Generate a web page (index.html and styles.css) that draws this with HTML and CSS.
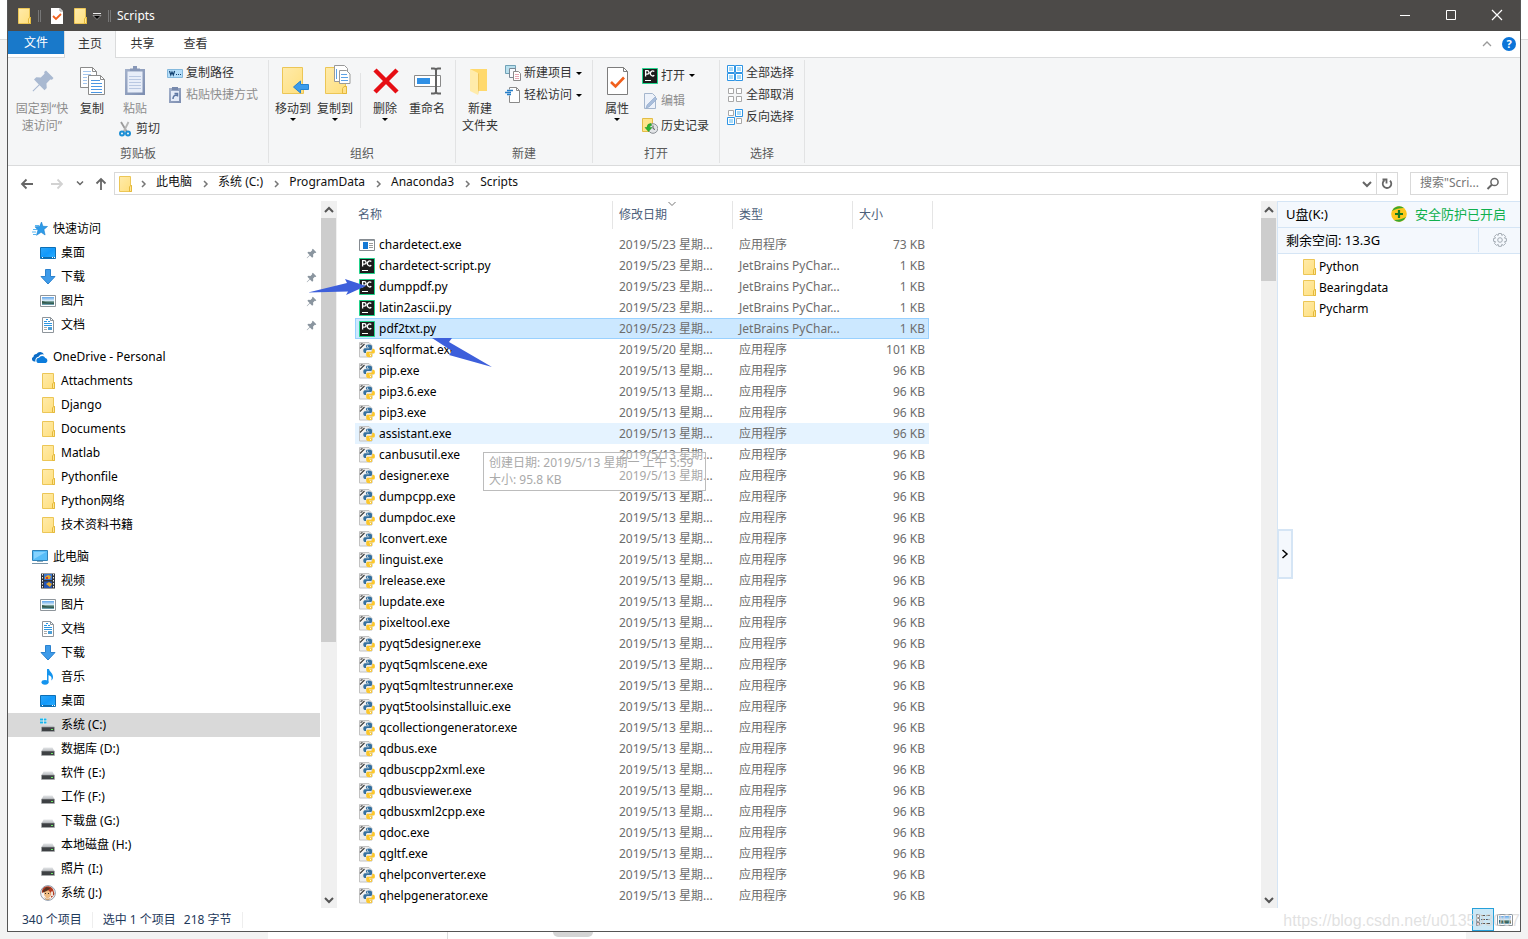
FILE: index.html
```html
<!DOCTYPE html>
<html lang="zh-CN">
<head>
<meta charset="utf-8">
<title>Scripts</title>
<link rel="stylesheet" href="styles.css">
</head>
<body>
<svg class="sprite" aria-hidden="true">
  <defs>
    <linearGradient id="g-folder" x1="0" y1="0" x2="1" y2="1"><stop offset="0" stop-color="#ffebab"/><stop offset="1" stop-color="#ffdf7c"/></linearGradient>
    <linearGradient id="g-clip" x1="0" y1="0" x2="1" y2="1"><stop offset="0" stop-color="#a3b1cb"/><stop offset="1" stop-color="#7c8db0"/></linearGradient>
    <linearGradient id="g-photo" x1="0" y1="0" x2="0" y2="1"><stop offset="0" stop-color="#5fa4ea"/><stop offset=".5" stop-color="#e2f1f8"/><stop offset=".6" stop-color="#3f6f62"/><stop offset="1" stop-color="#74a8bd"/></linearGradient>
    <linearGradient id="g-screen" x1="0" y1="0" x2="1" y2="1"><stop offset="0" stop-color="#2ea7f8"/><stop offset=".5" stop-color="#1199fb"/><stop offset="1" stop-color="#2fb0ff"/></linearGradient>
    <linearGradient id="g-drive" x1="0" y1="0" x2="0" y2="1"><stop offset="0" stop-color="#e4e6e8"/><stop offset="1" stop-color="#b3b6ba"/></linearGradient>
  </defs>
  <symbol id="folder" viewBox="0 0 16 16"><path d="M2.500.5h11v9h1v6h-12z" fill="url(#g-folder)" stroke="#ecc656"/><path d="M12.500 15v-4l1-1.500h1v6h-2z" fill="#ffe594" stroke="#e4b93b"/></symbol>
  <symbol id="star" viewBox="0 0 16 16"><path d="M9.500 1l1.400 4.300 4.600.2-3.600 3 1.200 5.500-4-2.700-4.600 3 1.500-5.300L3 5.800l4.600-.3z" fill="#2e9be8" stroke="#1a7fcf" stroke-width=".6"/><path d="M1 8.500h4M0 11h4M1 13.500h3M3 4.500h4" stroke="#58b6f2"/></symbol>
  <symbol id="desktop" viewBox="0 0 16 16"><path d="M.5 2.500h15v11H.5z" fill="url(#g-screen)" stroke="#0d6fb5"/><path d="M1 12.500h14" stroke="#0f6aa9"/><path d="M2 12.500h1M12 12.500h1M14 12.500h1" stroke="#fff"/></symbol>
  <symbol id="download" viewBox="0 0 16 16"><path d="M5.500.5h5v7h4.500L8 15 1 7.500h4.500z" fill="#3e9be9" stroke="#2b82cf"/></symbol>
  <symbol id="picture" viewBox="0 0 16 16"><path d="M.5 2.500h15v11H.5z" fill="#fff" stroke="#8e959b"/><path d="M2 4h12v8H2z" fill="url(#g-photo)"/><path d="M2 8l5 1.500 7 .5v1L2 10.500z" fill="#34594d"/></symbol>
  <symbol id="document" viewBox="0 0 16 16"><path d="M2.500.5h8l3 3v12h-11z" fill="#fff" stroke="#8e959b"/><path d="M10.500.5v3h3" fill="none" stroke="#8e959b"/><path d="M4 4.500h3M6 2.500h2M4 6.500h8M4 8.500h8M8 4.500h2" stroke="#2e96e0"/><path d="M4 10.500h3M4 12.500h3" stroke="#aaa"/><path d="M8 10h4v3H8z" fill="#4c9fd7"/></symbol>
  <symbol id="cloud" viewBox="0 0 16 16"><path d="M3.500 12.500H2.300A2.500 2.500 0 0 1 1.500 7.700 3 3 0 0 1 4.500 5 4.300 4.300 0 0 1 12 5.500 5 5 0 0 0 6.500 7.800 3.600 3.600 0 0 0 3.500 12.500z" fill="#0b6cc6"/><path d="M7 14a2.600 2.600 0 0 1 0-5.200A3.600 3.600 0 0 1 13.300 9a2.600 2.600 0 0 1 .4 5z" fill="#0c7cdc"/></symbol>
  <symbol id="computer" viewBox="0 0 16 16"><path d="M.5 1.500h15v10H.5z" fill="#58bdf8" stroke="#3182b8"/><path d="M2 3h12L2 10z" fill="#86d3ff"/><path d="M5 12.500h6" stroke="#8caabc"/><path d="M0 14.500h16" stroke="#7794a8"/></symbol>
  <symbol id="video" viewBox="0 0 16 16"><path d="M1 .5h14v15H1z" fill="#30343b"/><path d="M4 1h8v6H4z" fill="#3c78d0"/><path d="M4 8.500h8V15H4z" fill="#2455b4"/><path d="M5 4l3-2 3 1-1 3H5zM6 11l3-2 3 2-2 3z" fill="#e5a62c"/><path d="M6 4h2v2H6z" fill="#c93c2a"/><path d="M2.500 1v14M13.500 1v14" stroke="#eee" stroke-dasharray="1.500 1.500"/></symbol>
  <symbol id="music" viewBox="0 0 16 16"><ellipse cx="5" cy="13.300" rx="3.500" ry="2.400" fill="#1494ee"/><path d="M7 0h2c.4 3 4.500 4 4 9-.3 1-1 2-1.800 2.500C12.500 8 10.500 7 8.500 6v7.500H7z" fill="#1494ee"/></symbol>
  <symbol id="drive" viewBox="0 0 16 16"><path d="M3.500 6.500h9l2 4h-13z" fill="url(#g-drive)"/><path d="M1.500 10h13v4.500h-13z" fill="#3e4144" stroke="#a9acaf" stroke-width=".6"/><path d="M11 12.500h2" stroke="#6bea64"/></symbol>
  <symbol id="sysdrive" viewBox="0 0 16 16"><path d="M3.500 7.500h9l2 3h-13z" fill="url(#g-drive)"/><path d="M1.500 10h13v4.500h-13z" fill="#3e4144" stroke="#a9acaf" stroke-width=".6"/><path d="M11 12.500h2" stroke="#6bea64"/><path d="M0 1h7v6H0z" fill="#fff" opacity=".5"/><path d="M0 1.500h3v2H0zM3.800 1.500h2.700v2H3.800zM0 4.500h3v2H0zM3.800 4.500h2.700v2H3.800z" fill="#19b5ec"/></symbol>
  <symbol id="face" viewBox="0 0 16 16"><circle cx="8" cy="8" r="7.400" fill="#f8f4f1" stroke="#8f9cac"/><path d="M2 8a6 6 0 0 1 11-4l1.500 5-3 4-2-6-4-1z" fill="#b33a22"/><path d="M4 6l4-1 3 3-1 4-3 2-3-4z" fill="#efbc83"/><path d="M2.500 6l4-4 4 1-3 2.500-4 2z" fill="#5a3323"/><path d="M5 8.500h1M8 8.500h1" stroke="#342b25"/><path d="M11 6.500h2v4.500h-2z" fill="#f1ded2"/><path d="M4 12l3 2 4-1-2 2H6z" fill="#c9a072"/></symbol>
  <symbol id="pin" viewBox="0 0 16 16"><path d="M10 1l5 5-1 1.200-1.200-.2-2.500 2.600.2 3-1.500 1.500L5.700 10.800 1.500 15 1 14.500l4.200-4.200L2 7l1.500-1.500 3 .2L9 3.200 8.800 2z"/></symbol>
  <symbol id="exe" viewBox="0 0 16 16"><path d="M.5 2.500h15v11H.5z" fill="#fff" stroke="#858b91"/><path d="M1 3.500h14" stroke="#9aa0a5"/><path d="M4 5h5v7H4z" fill="#1478d4"/><path d="M10 6.500h4M10 8.500h4M10 10.500h4" stroke="#9a9a9a"/></symbol>
  <symbol id="pycharm" viewBox="0 0 16 16"><path d="M.5.5h15v15H.5z" fill="#1c1c1c" stroke="#22d38c"/><path d="M3.600 8.500V2.700h1.700a1.700 1.700 0 0 1 0 3.400H3.600M12.300 3.600A2.400 2.400 0 1 0 12.300 7.300" fill="none" stroke="#fff" stroke-width="1.300"/><path d="M3 12.500h6" stroke="#fff"/></symbol>
  <symbol id="python" viewBox="0 0 16 16"><path d="M.5.500h9.500l3 3v11.500H.5z" fill="#ececec" stroke="#c2c2c2"/><path d="M1 6.500L5.500 2M1.500 2.500L3.500 1.500" stroke="#444" stroke-width="1.200"/><path d="M1.500 8L6 3.500" stroke="#fff"/><path d="M10 2.500c-2.800 0-3 .9-3 2v1h3.200v.7H5.800C3.800 6.200 3.800 11 5.800 11H7V9.500C7 8.500 7.700 8 8.700 8h2.800c1 0 1.500-.6 1.500-1.500v-2c0-1.300-1-2-3-2z" fill="#35709f"/><path d="M10 2.500c-2.800 0-3 .9-3 2v1h3.200v.7H5.800C3.800 6.200 3.800 11 5.800 11H7V9.500C7 8.500 7.700 8 8.700 8h2.800c1 0 1.500-.6 1.500-1.500v-2c0-1.300-1-2-3-2z" fill="#fcc72c" transform="rotate(180 10.100 8.900)"/><path d="M8 4.200h1M11 13.600h1" stroke="#fff"/></symbol>
  <symbol id="chev-r" viewBox="0 0 16 16"><path d="M6 5l3 3-3 3" fill="none" stroke="currentColor" stroke-width="1.500"/></symbol>
  <symbol id="chev-d" viewBox="0 0 16 16"><path d="M4 6l4 4 4-4" fill="none" stroke="currentColor" stroke-width="2"/></symbol>
  <symbol id="chev-u" viewBox="0 0 16 16"><path d="M4 10l4-4 4 4" fill="none" stroke="currentColor" stroke-width="2"/></symbol>
  <symbol id="caret" viewBox="0 0 6 3"><path d="M0 0h6L3 3z"/></symbol>
  <symbol id="arrow-l" viewBox="0 0 16 16"><path d="M14 8H3M7.500 3.500L3 8l4.500 4.500" fill="none" stroke="currentColor" stroke-width="1.800"/></symbol>
  <symbol id="props" viewBox="0 0 32 32"><path d="M6.500 2.500h16l4 4v23h-20z" fill="#fff" stroke="#7d7d7d"/><path d="M22.500 2.500v4h4" fill="none" stroke="#7d7d7d"/><path d="M10 17l4.500 4.500L23 12.500" fill="none" stroke="#f1601d" stroke-width="2.600"/></symbol>
</svg>

<div class="window">
  <header class="titlebar">
    <svg class="i16"><use href="#folder"/></svg>
    <span class="qat-sep"></span>
    <button class="qat props-btn" aria-label="属性"><svg class="i16" viewBox="0 0 16 16"><path d="M2 0h9l3 3v13H2z" fill="#fff"/><path d="M11 0v3h3" fill="none" stroke="#999"/><path d="M4 8l3 3 5-5" fill="none" stroke="#f1601d" stroke-width="1.800"/></svg></button>
    <button class="qat" aria-label="新建文件夹"><svg class="i16"><use href="#folder"/></svg></button>
    <button class="qat qat-more" aria-label="自定义快速访问工具栏"><svg width="10" height="8" viewBox="0 0 10 8"><path d="M1 1.500h8" stroke="#eee"/><path d="M1 3.500h8L5 7.500z" fill="#000" stroke="#eee" stroke-width=".5"/></svg></button>
    <span class="qat-sep"></span>
    <h1 class="title">Scripts</h1>
    <div class="controls">
      <button aria-label="最小化"><svg class="i16" viewBox="0 0 16 16"><path d="M3 7.500h10" stroke="#fff"/></svg></button>
      <button aria-label="最大化"><svg class="i16" viewBox="0 0 16 16"><path d="M3.500 2.500h9v9h-9z" fill="none" stroke="#fff"/></svg></button>
      <button aria-label="关闭"><svg class="i16" viewBox="0 0 16 16"><path d="M3 2l10 10M13 2L3 12" stroke="#fff" stroke-width="1.200"/></svg></button>
    </div>
  </header>

  <nav class="tabs">
    <button class="tab tab-file">文件</button>
    <button class="tab tab-active">主页</button>
    <button class="tab">共享</button>
    <button class="tab">查看</button>
    <div class="tab-tools">
      <button aria-label="折叠功能区"><svg class="i16" viewBox="0 0 16 16"><path d="M4 10l4-4 4 4" fill="none" stroke="#9a9a9a" stroke-width="1.300"/></svg></button>
      <button class="help" aria-label="帮助">?</button>
    </div>
  </nav>

  <section class="ribbon">
    <div class="group">
      <div class="group-body clipboard">
        <button class="big big-pin" disabled><svg class="i32 pin-large" viewBox="0 0 32 32"><svg x="5" y="4" width="24" height="24" viewBox="0 0 16 16"><use href="#pin"/></svg></svg><span>固定到“快<br>速访问”</span></button>
        <button class="big big-copy"><svg class="i32" viewBox="0 0 32 32"><g stroke="#8b8b8b" fill="#fff"><path d="M4.500 2.500h12l4 4v16h-16z"/><path d="M12.500 10.500h12l4 4v15h-16z"/><path d="M24.500 10.500v4h4M16.500 2.500v4h4" fill="none"/></g><path d="M7 6.500h8M7 9.500h8M7 12.500h4M7 15.500h4M7 18.500h4" stroke="#a4c6ee"/><path d="M15 15.500h9M15 18.500h11M15 21.500h11M15 24.500h11M15 27.500h11" stroke="#4b96e2"/></svg><span>复制</span></button>
        <div class="paste-col">
          <button class="big big-copy" disabled><svg class="i32" viewBox="0 0 32 32"><path d="M6 4h20v26H6z" fill="url(#g-clip)"/><path d="M8.500 6.500h15v21h-15z" fill="#e8eef9"/><path d="M11 6V3.500h3V1h4v2.500h3V6z" fill="#8898b8"/><path d="M10 11.500h12M10 14.500h12M10 17.500h12M10 20.500h12M10 23.500h12" stroke="#b9c8e2"/></svg><span>粘贴</span></button>
          <button class="small cut"><svg class="i16" viewBox="0 0 16 16"><path d="M4 1l6 10" stroke="#9a9a9a" stroke-width="1.800"/><path d="M11.500 1l-5 10" stroke="#b5b5b5" stroke-width="1.800"/><g fill="none" stroke="#1c8fd5" stroke-width="2"><circle cx="5" cy="12.500" r="2"/><circle cx="11" cy="12.500" r="2"/></g></svg>剪切</button>
        </div>
        <div class="small-col">
          <button class="small"><svg class="i16" viewBox="0 0 16 16"><path d="M.5 4.500h15v8H.5z" fill="#b4defa" stroke="#84b9dd"/><path d="M2.500 6l1.300 4L5 7l1.300 3 1.300-4" fill="none" stroke="#154574" stroke-width="1.200"/><path d="M9 9.500h1M11 9.500h1M13 9.500h1" stroke="#154574"/></svg>复制路径</button>
          <button class="small" disabled><svg class="i16" viewBox="0 0 16 16"><path d="M2 1h12v15H2z" fill="url(#g-clip)"/><path d="M5 0h6v3H5z" fill="#7789ac"/><path d="M4 4h8v10H4z" fill="#e4ebf8"/><path d="M6 12q0-4 4-4M7.500 6.500h3v3" fill="none" stroke="#5e77a3" stroke-width="1.500"/></svg>粘贴快捷方式</button>
        </div>
      </div>
      <div class="group-label">剪贴板</div>
    </div>
    <div class="group group-org">
      <div class="group-body">
        <button class="big"><svg class="i32" viewBox="0 0 32 32"><path d="M5.500 2.500h20v19h1v7h-21z" fill="url(#g-folder)" stroke="#ecc656"/><path d="M16.500 22l7-6v3.500h8v5h-8V28z" fill="#3b9cec" stroke="#2583d2"/></svg><span>移动到</span><svg class="caret"><use href="#caret"/></svg></button>
        <button class="big"><svg class="i32" viewBox="0 0 32 32"><path d="M6.500 2.500h20v19h1v7h-21z" fill="url(#g-folder)" stroke="#ecc656"/><path d="M23.500 28.500v-5l1.500-2h2.500v7z" fill="#ffe08a" stroke="#e4b93b"/><path d="M15.500.5h10l3 3v13h-13z" fill="#fff" stroke="#999"/><path d="M20.500 5.500h7l3.500 3.500v9.500H20.500z" fill="#fff" stroke="#999"/><path d="M17.500 4v10M22 9.500h6M22 12.500h7M22 15.500h7" stroke="#5da2e6"/></svg><span>复制到</span><svg class="caret"><use href="#caret"/></svg></button>
        <span class="inner-sep"></span>
        <button class="big"><svg class="i32" viewBox="0 0 32 32"><path d="M6 5l22 22M28 5L6 27" stroke="#e60e14" stroke-width="4.500"/></svg><span>删除</span><svg class="caret"><use href="#caret"/></svg></button>
        <button class="big"><svg class="i32" viewBox="0 0 32 32"><path d="M3.500 10.500h26v11h-26z" fill="#fff" stroke="#8a8a8a"/><path d="M6 13h13v6H6z" fill="#3090e5"/><path d="M20 3.500h3q2 0 2 2 0-2 2-2h3M20 28.500h3q2 0 2-2 0 2 2 2h3M25 5v22" fill="none" stroke="#626262" stroke-width="2"/></svg><span>重命名</span></button>
      </div>
      <div class="group-label">组织</div>
    </div>
    <div class="group group-new">
      <div class="group-body">
        <button class="big"><svg class="i32" viewBox="0 0 32 32"><path d="M6 4h17v22H9z" fill="#ffd96d"/><path d="M6 4l8 4v22l-8-4z" fill="#ffebaa"/><path d="M14 9l1-1v15l-1 7z" fill="#edc45a"/></svg><span>新建<br>文件夹</span></button>
        <div class="small-col">
          <button class="small"><svg class="i16" viewBox="0 0 16 16"><path d="M.5.5h10v8H.5z" fill="#b9e0ee" stroke="#71a2b7"/><path d="M4.500 3.500h6v9h-6z" fill="#f8fbff" stroke="#7a8794"/><path d="M8.500 6.500h5l2 2v7h-7z" fill="#fff" stroke="#8a8a8a"/><path d="M10 9.500h4M10 11.500h4M10 13.500h4" stroke="#e5a7b5"/></svg>新建项目<svg class="caret"><use href="#caret"/></svg></button>
          <button class="small"><svg class="i16" viewBox="0 0 16 16"><path d="M4.500 2.500v-2h7l3 3v12h-10v-7" fill="#fff" stroke="#8a8a8a"/><path d="M11.500.5v3h3" fill="none" stroke="#8a8a8a"/><path d="M2 3.500h6M0 5.500h6M2 7.500h4" stroke="#267ec8" stroke-width="1.300"/></svg>轻松访问<svg class="caret"><use href="#caret"/></svg></button>
        </div>
      </div>
      <div class="group-label">新建</div>
    </div>
    <div class="group group-open">
      <div class="group-body">
        <button class="big"><svg class="i32"><use href="#props"/></svg><span>属性</span><svg class="caret"><use href="#caret"/></svg></button>
        <div class="small-col roomy">
          <button class="small"><svg class="i16"><use href="#pycharm"/></svg>打开<svg class="caret"><use href="#caret"/></svg></button>
          <button class="small" disabled><svg class="i16" viewBox="0 0 16 16"><path d="M2.500.5h8l3 3v12h-11z" fill="#edf2fa" stroke="#a5b6cd"/><path d="M5 12l8-8 2 2-8 8-3 1z" fill="#a9bedb" stroke="#8ca5c8" stroke-width=".6"/></svg>编辑</button>
          <button class="small"><svg class="i16" viewBox="0 0 16 16"><path d="M.5.5h10v13H.5z" fill="#ffe48b" stroke="#e2bd47"/><circle cx="11" cy="10.500" r="4.800" fill="#e2e4e7" stroke="#8a8f94"/><path d="M11 7.500v3l2 1" fill="none" stroke="#555"/><path d="M9 5.500q-4 0-4 4H3l3.500 4L10 9.500H7.500q0-2 2-2z" fill="#2bb32f" stroke="#168d1d" stroke-width=".5"/></svg>历史记录</button>
        </div>
      </div>
      <div class="group-label">打开</div>
    </div>
    <div class="group group-select">
      <div class="group-body">
        <div class="small-col">
          <button class="small"><svg class="i16" viewBox="0 0 16 16"><path d="M.5.500h7v7h-7zM8.500.5h7v7h-7zM.5 8.500h7v7h-7zM8.500 8.500h7v7h-7z" fill="#fff" stroke="#2f95e4"/><path d="M2 2h4v4H2zM10 2h4v4h-4zM2 10h4v4H2zM10 10h4v4h-4z" fill="#a9dbf8"/></svg>全部选择</button>
          <button class="small"><svg class="i16" viewBox="0 0 16 16"><path d="M1.500 1.500h5v5h-5zM9.500 1.500h5v5h-5zM1.500 9.500h5v5h-5zM9.500 9.500h5v5h-5z" fill="#fff" stroke="#a8a8a8"/></svg>全部取消</button>
          <button class="small"><svg class="i16" viewBox="0 0 16 16"><path d="M1.500 1.500h5v5h-5zM9.500 9.500h5v5h-5z" fill="#fff" stroke="#a8a8a8"/><path d="M8.500.5h7v7h-7zM.5 8.500h7v7h-7z" fill="#fff" stroke="#2f95e4"/><path d="M10 2h4v4h-4zM2 10h4v4H2z" fill="#a9dbf8"/></svg>反向选择</button>
        </div>
      </div>
      <div class="group-label">选择</div>
    </div>
  </section>

  <div class="addressbar">
    <div class="history">
      <button aria-label="后退"><svg class="i16"><use href="#arrow-l"/></svg></button>
      <button class="fwd" aria-label="前进" disabled><svg class="i16" viewBox="0 0 16 16"><path d="M2 8h11M8.500 3.500L13 8l-4.500 4.500" fill="none" stroke="currentColor" stroke-width="1.800"/></svg></button>
      <button class="recent" aria-label="最近位置"><svg class="i16" viewBox="0 0 16 16"><path d="M5 5.500l3 3 3-3" fill="none" stroke="currentColor" stroke-width="1.500"/></svg></button>
      <button class="up" aria-label="上移"><svg class="i16" viewBox="0 0 16 16"><path d="M8 14V3M3.500 7.500L8 3l4.500 4.500" fill="none" stroke="currentColor" stroke-width="1.800"/></svg></button>
    </div>
    <div class="path">
      <svg class="i16"><use href="#folder"/></svg>
      <svg class="crumb-sep"><use href="#chev-r"/></svg><a href="#">此电脑</a>
      <svg class="crumb-sep"><use href="#chev-r"/></svg><a href="#">系统 (C:)</a>
      <svg class="crumb-sep"><use href="#chev-r"/></svg><a href="#">ProgramData</a>
      <svg class="crumb-sep"><use href="#chev-r"/></svg><a href="#">Anaconda3</a>
      <svg class="crumb-sep"><use href="#chev-r"/></svg><a href="#">Scripts</a>
      <button class="path-drop" aria-label="以前的位置"><svg class="i16"><use href="#chev-d"/></svg></button>
      <button class="refresh" aria-label="刷新"><svg class="i16" viewBox="0 0 16 16"><path d="M5.500 4.200a4.300 4.300 0 1 0 5.500.4" fill="none" stroke="#666" stroke-width="1.800"/><path d="M3.500 3.500h4v4" fill="none" stroke="#666" stroke-width="1.800"/></svg></button>
    </div>
    <label class="search"><input type="text" placeholder="搜索&quot;Scri..." aria-label="搜索Scripts"><svg class="i16" viewBox="0 0 16 16"><circle cx="9.500" cy="6" r="3.600" fill="none" stroke="#666" stroke-width="1.500"/><path d="M7 8.500L2.500 13" stroke="#666" stroke-width="2"/></svg></label>
  </div>

  <main class="content">
    <aside class="sidebar">
      <ul class="tree">
        <li><a class="root" href="#"><svg class="i16"><use href="#star"/></svg>快速访问</a></li>
        <li><a href="#"><svg class="i16"><use href="#desktop"/></svg>桌面<svg class="pin"><use href="#pin"/></svg></a></li>
        <li><a href="#"><svg class="i16"><use href="#download"/></svg>下载<svg class="pin"><use href="#pin"/></svg></a></li>
        <li><a href="#"><svg class="i16"><use href="#picture"/></svg>图片<svg class="pin"><use href="#pin"/></svg></a></li>
        <li><a href="#"><svg class="i16"><use href="#document"/></svg>文档<svg class="pin"><use href="#pin"/></svg></a></li>
      </ul>
      <ul class="tree">
        <li><a class="root" href="#"><svg class="i16"><use href="#cloud"/></svg>OneDrive - Personal</a></li>
        <li><a href="#"><svg class="i16"><use href="#folder"/></svg>Attachments</a></li>
        <li><a href="#"><svg class="i16"><use href="#folder"/></svg>Django</a></li>
        <li><a href="#"><svg class="i16"><use href="#folder"/></svg>Documents</a></li>
        <li><a href="#"><svg class="i16"><use href="#folder"/></svg>Matlab</a></li>
        <li><a href="#"><svg class="i16"><use href="#folder"/></svg>Pythonfile</a></li>
        <li><a href="#"><svg class="i16"><use href="#folder"/></svg>Python网络</a></li>
        <li><a href="#"><svg class="i16"><use href="#folder"/></svg>技术资料书籍</a></li>
      </ul>
      <ul class="tree">
        <li><a class="root" href="#"><svg class="i16"><use href="#computer"/></svg>此电脑</a></li>
        <li><a href="#"><svg class="i16"><use href="#video"/></svg>视频</a></li>
        <li><a href="#"><svg class="i16"><use href="#picture"/></svg>图片</a></li>
        <li><a href="#"><svg class="i16"><use href="#document"/></svg>文档</a></li>
        <li><a href="#"><svg class="i16"><use href="#download"/></svg>下载</a></li>
        <li><a href="#"><svg class="i16"><use href="#music"/></svg>音乐</a></li>
        <li><a href="#"><svg class="i16"><use href="#desktop"/></svg>桌面</a></li>
        <li><a class="current" href="#"><svg class="i16"><use href="#sysdrive"/></svg>系统 (C:)</a></li>
        <li><a href="#"><svg class="i16"><use href="#drive"/></svg>数据库 (D:)</a></li>
        <li><a href="#"><svg class="i16"><use href="#drive"/></svg>软件 (E:)</a></li>
        <li><a href="#"><svg class="i16"><use href="#drive"/></svg>工作 (F:)</a></li>
        <li><a href="#"><svg class="i16"><use href="#drive"/></svg>下载盘 (G:)</a></li>
        <li><a href="#"><svg class="i16"><use href="#drive"/></svg>本地磁盘 (H:)</a></li>
        <li><a href="#"><svg class="i16"><use href="#drive"/></svg>照片 (I:)</a></li>
        <li><a href="#"><svg class="i16"><use href="#face"/></svg>系统 (J:)</a></li>
      </ul>
    </aside>
    <div class="scrollbar">
      <button aria-label="向上滚动"><svg class="i16"><use href="#chev-u"/></svg></button>
      <div class="track"><div class="thumb thumb-nav"></div></div>
      <button aria-label="向下滚动"><svg class="i16"><use href="#chev-d"/></svg></button>
    </div>

    <section class="files">
      <table>
        <colgroup><col class="c-name"><col class="c-date"><col class="c-type"><col class="c-size"><col class="c-end"></colgroup>
        <thead><tr>
          <th><span>名称</span></th>
          <th><span>修改日期<svg class="sort" viewBox="0 0 8 4"><path d="M.5 0L4 3.500 7.500 0" fill="none" stroke="#777"/></svg></span></th>
          <th><span>类型</span></th>
          <th colspan="2"><span>大小</span></th>
        </tr></thead>
        <tbody>
          <tr><td><svg class="i16"><use href="#exe"/></svg>chardetect.exe</td><td>2019/5/23 星期...</td><td>应用程序</td><td>73 KB</td></tr>
          <tr><td><svg class="i16"><use href="#pycharm"/></svg>chardetect-script.py</td><td>2019/5/23 星期...</td><td>JetBrains PyChar...</td><td>1 KB</td></tr>
          <tr><td><svg class="i16"><use href="#pycharm"/></svg>dumppdf.py</td><td>2019/5/23 星期...</td><td>JetBrains PyChar...</td><td>1 KB</td></tr>
          <tr><td><svg class="i16"><use href="#pycharm"/></svg>latin2ascii.py</td><td>2019/5/23 星期...</td><td>JetBrains PyChar...</td><td>1 KB</td></tr>
          <tr class="selected"><td><svg class="i16"><use href="#pycharm"/></svg>pdf2txt.py</td><td>2019/5/23 星期...</td><td>JetBrains PyChar...</td><td>1 KB</td></tr>
          <tr><td><svg class="i16"><use href="#python"/></svg>sqlformat.exe</td><td>2019/5/20 星期...</td><td>应用程序</td><td>101 KB</td></tr>
          <tr><td><svg class="i16"><use href="#python"/></svg>pip.exe</td><td>2019/5/13 星期...</td><td>应用程序</td><td>96 KB</td></tr>
          <tr><td><svg class="i16"><use href="#python"/></svg>pip3.6.exe</td><td>2019/5/13 星期...</td><td>应用程序</td><td>96 KB</td></tr>
          <tr><td><svg class="i16"><use href="#python"/></svg>pip3.exe</td><td>2019/5/13 星期...</td><td>应用程序</td><td>96 KB</td></tr>
          <tr class="hovered"><td><svg class="i16"><use href="#python"/></svg>assistant.exe</td><td>2019/5/13 星期...</td><td>应用程序</td><td>96 KB</td></tr>
          <tr><td><svg class="i16"><use href="#python"/></svg>canbusutil.exe</td><td>2019/5/13 星期...</td><td>应用程序</td><td>96 KB</td></tr>
          <tr><td><svg class="i16"><use href="#python"/></svg>designer.exe</td><td>2019/5/13 星期...</td><td>应用程序</td><td>96 KB</td></tr>
          <tr><td><svg class="i16"><use href="#python"/></svg>dumpcpp.exe</td><td>2019/5/13 星期...</td><td>应用程序</td><td>96 KB</td></tr>
          <tr><td><svg class="i16"><use href="#python"/></svg>dumpdoc.exe</td><td>2019/5/13 星期...</td><td>应用程序</td><td>96 KB</td></tr>
          <tr><td><svg class="i16"><use href="#python"/></svg>lconvert.exe</td><td>2019/5/13 星期...</td><td>应用程序</td><td>96 KB</td></tr>
          <tr><td><svg class="i16"><use href="#python"/></svg>linguist.exe</td><td>2019/5/13 星期...</td><td>应用程序</td><td>96 KB</td></tr>
          <tr><td><svg class="i16"><use href="#python"/></svg>lrelease.exe</td><td>2019/5/13 星期...</td><td>应用程序</td><td>96 KB</td></tr>
          <tr><td><svg class="i16"><use href="#python"/></svg>lupdate.exe</td><td>2019/5/13 星期...</td><td>应用程序</td><td>96 KB</td></tr>
          <tr><td><svg class="i16"><use href="#python"/></svg>pixeltool.exe</td><td>2019/5/13 星期...</td><td>应用程序</td><td>96 KB</td></tr>
          <tr><td><svg class="i16"><use href="#python"/></svg>pyqt5designer.exe</td><td>2019/5/13 星期...</td><td>应用程序</td><td>96 KB</td></tr>
          <tr><td><svg class="i16"><use href="#python"/></svg>pyqt5qmlscene.exe</td><td>2019/5/13 星期...</td><td>应用程序</td><td>96 KB</td></tr>
          <tr><td><svg class="i16"><use href="#python"/></svg>pyqt5qmltestrunner.exe</td><td>2019/5/13 星期...</td><td>应用程序</td><td>96 KB</td></tr>
          <tr><td><svg class="i16"><use href="#python"/></svg>pyqt5toolsinstalluic.exe</td><td>2019/5/13 星期...</td><td>应用程序</td><td>96 KB</td></tr>
          <tr><td><svg class="i16"><use href="#python"/></svg>qcollectiongenerator.exe</td><td>2019/5/13 星期...</td><td>应用程序</td><td>96 KB</td></tr>
          <tr><td><svg class="i16"><use href="#python"/></svg>qdbus.exe</td><td>2019/5/13 星期...</td><td>应用程序</td><td>96 KB</td></tr>
          <tr><td><svg class="i16"><use href="#python"/></svg>qdbuscpp2xml.exe</td><td>2019/5/13 星期...</td><td>应用程序</td><td>96 KB</td></tr>
          <tr><td><svg class="i16"><use href="#python"/></svg>qdbusviewer.exe</td><td>2019/5/13 星期...</td><td>应用程序</td><td>96 KB</td></tr>
          <tr><td><svg class="i16"><use href="#python"/></svg>qdbusxml2cpp.exe</td><td>2019/5/13 星期...</td><td>应用程序</td><td>96 KB</td></tr>
          <tr><td><svg class="i16"><use href="#python"/></svg>qdoc.exe</td><td>2019/5/13 星期...</td><td>应用程序</td><td>96 KB</td></tr>
          <tr><td><svg class="i16"><use href="#python"/></svg>qgltf.exe</td><td>2019/5/13 星期...</td><td>应用程序</td><td>96 KB</td></tr>
          <tr><td><svg class="i16"><use href="#python"/></svg>qhelpconverter.exe</td><td>2019/5/13 星期...</td><td>应用程序</td><td>96 KB</td></tr>
          <tr><td><svg class="i16"><use href="#python"/></svg>qhelpgenerator.exe</td><td>2019/5/13 星期...</td><td>应用程序</td><td>96 KB</td></tr>
        </tbody>
      </table>
      <div class="tooltip" role="tooltip">创建日期: 2019/5/13 星期一 上午 5:59<br>大小: 95.8 KB</div>
      <svg class="marks" viewBox="0 0 190 100" aria-hidden="true"><path d="M3 17.500L42 8 40 4 61 11 41 20 43 16.500zM127 63h20l-3 4 43 25-43-12 3-4z" fill="#3d5fdb"/></svg>
    </section>
    <div class="scrollbar">
      <button aria-label="向上滚动"><svg class="i16"><use href="#chev-u"/></svg></button>
      <div class="track"><div class="thumb thumb-files"></div></div>
      <button aria-label="向下滚动"><svg class="i16"><use href="#chev-d"/></svg></button>
    </div>

    <aside class="usb">
      <div class="usb-row"><span>U盘(K:)</span>
        <span class="guard"><svg class="i16" viewBox="0 0 16 16"><circle cx="8" cy="8" r="7.800" fill="#fdc81e"/><path d="M1 5A7.800 7.800 0 0 1 13 2Q6 2 1 5zM15 11A7.800 7.800 0 0 1 3 14Q10 14 15 11z" fill="#3aa72e"/><path d="M8 4v8M4 8h8" stroke="#167a20" stroke-width="2.200"/></svg>安全防护已开启</span></div>
      <div class="usb-row"><span>剩余空间: 13.3G</span>
        <button class="gear" aria-label="设置"><svg class="i16" viewBox="0 0 16 16" fill="none" stroke="#a3abb3"><circle cx="8" cy="8" r="2.300"/><path d="M6.600 1h2.800l.4 1.900 1.700-1 2 2-1 1.700 1.900.4v2.800l-1.900.4 1 1.700-2 2-1.700-1-.4 1.900H6.600l-.4-1.900-1.700 1-2-2 1-1.700-1.900-.4V6l1.900-.4-1-1.700 2-2 1.700 1z" transform="translate(0 .5)"/></svg></button></div>
      <ul class="usb-list">
        <li><a href="#"><svg class="i16"><use href="#folder"/></svg>Python</a></li>
        <li><a href="#"><svg class="i16"><use href="#folder"/></svg>Bearingdata</a></li>
        <li><a href="#"><svg class="i16"><use href="#folder"/></svg>Pycharm</a></li>
      </ul>
      <button class="drawer" aria-label="收起"><svg class="i16" viewBox="0 0 16 16"><path d="M5.500 4l4.500 4-4.500 4" fill="none" stroke="#000" stroke-width="1.500"/></svg></button>
    </aside>
  </main>

  <footer class="status">
    <span class="stat">340 个项目</span>
    <span class="stat stat-sel"><span>选中 1 个项目</span><span>218 字节</span></span>
    <div class="views">
      <button class="view view-on" aria-label="详细信息"><svg class="i16" viewBox="0 0 16 16"><path d="M1.500 2.500h3v3h-3zM1.500 6.500h3v3h-3zM1.500 10.500h3v3h-3z" fill="#fff" stroke="#8a8a8a"/><path d="M6 3.500h4M11 3.500h4M6 7.500h4M11 7.500h4M6 11.500h4M11 11.500h4" stroke="#555"/><path d="M2.500 12h1" stroke="#d33"/></svg></button>
      <button class="view" aria-label="大图标"><svg class="i16"><use href="#picture"/></svg></button>
    </div>
    <span class="watermark">https://blog.csdn.net/u013593007</span>
  </footer>
</div>
<div class="behind"><span class="behind-tab"></span><span class="behind-page"><i class="handle"></i></span></div>
</body>
</html>
```
FILE: styles.css
```css
* { box-sizing: border-box; }

body {
  margin: 0;
  min-height: 100vh;
  display: flex;
  flex-direction: column;
  background: linear-gradient(#fff 39px, #dcdcdc 39px, #dcdcdc 40px, #f3f3f3 40px);
  color: #000;
  font: 12px/16px "Noto Sans", "Noto Sans CJK SC", sans-serif;
}

button {
  margin: 0;
  padding: 0;
  border: 0;
  background: none;
  color: inherit;
  font: inherit;
}

a { color: inherit; text-decoration: none; }
ul { margin: 0; padding: 0; list-style: none; }
svg { display: block; flex: none; }

.sprite { position: absolute; width: 0; height: 0; }
.i16 { width: 16px; height: 16px; }
.i32 { width: 32px; height: 32px; }
.caret { width: 6px; height: 3px; }

.window {
  flex: 1;
  display: flex;
  flex-direction: column;
  margin: 0 7px;
  border: 1px solid #555;
  border-top: 0;
  background: #fff;
}

/* title bar */
.titlebar {
  display: flex;
  align-items: center;
  height: 31px;
  padding-left: 8px;
  background: #4c4a48;
  color: #fff;
}
.qat-sep { width: 3px; height: 12px; margin-left: 6px; border: solid #777; border-width: 0 1px; }
.qat { margin-left: 7px; }
.props-btn { margin-left: 8px; }
.qat-more { margin-left: 4px; }
.qat-more + .qat-sep { margin-left: 6px; }
.title { margin: 0 0 0 6px; font-size: 12px; font-weight: 400; }
.controls { display: flex; margin-left: auto; align-self: stretch; }
.controls button { display: flex; align-items: center; justify-content: center; width: 46px; }

/* ribbon tabs */
.tabs { display: flex; height: 27px; border-bottom: 1px solid #dadbdc; }
.tab { width: 53px; height: 26px; color: #333; }
.tab-file { width: 56px; height: 23px; background: #1979ca; color: #fff; }
.tab-active { width: 52px; height: 27px; padding-bottom: 2px; border: solid #dadbdc; border-width: 0 1px; background: #f5f6f7; }
.tab-tools { display: flex; align-items: center; gap: 7px; margin-left: auto; padding-right: 4px; }
.help {
  width: 14px;
  height: 14px;
  border-radius: 50%;
  background: #0b74d8;
  color: #fff;
  font-weight: 700;
  font-size: 11px;
  line-height: 14px;
}

/* ribbon */
.ribbon {
  display: flex;
  padding: 2px 0;
  border-bottom: 1px solid #dadbdc;
  background: #f5f6f7;
  color: #333;
}
.group { display: flex; flex-direction: column; padding: 2px 3px 1px; border-right: 1px solid #e2e3e4; }
.group-body { display: flex; height: 84px; }
.group-label { color: #5a5a5a; text-align: center; }
.big {
  display: flex;
  flex-direction: column;
  align-items: center;
  width: 42px;
  padding-top: 3px;
  line-height: 17px;
  white-space: nowrap;
}
.big span { margin-top: 3px; }
.big .caret { margin-top: 1px; }
.big-pin { width: 60px; }
.big-copy { width: 40px; }
.pin-large { fill: #a9b9d1; }
.small { display: flex; align-items: center; gap: 3px; height: 22px; white-space: nowrap; }
.small .caret { margin-left: 1px; }
.small-col { padding-left: 4px; }
.roomy { padding-top: 1px; }
.roomy .small { height: 25px; }
button:disabled { color: #8d8d8d; }
.paste-col { display: flex; flex-direction: column; align-items: flex-start; width: 50px; margin-left: 3px; }
.cut { height: 24px; padding-left: 2px; }
.clipboard { padding-left: 1px; }
.clipboard .small-col { padding-left: 2px; }
.group:first-child { width: 261px; }
.group-org { width: 187px; }
.group-new { width: 137px; }
.group-open { width: 127px; }
.group-select { width: 85px; }
.inner-sep { width: 1px; height: 55px; margin: 11px 3px 0 4px; background: #e2e3e4; }

/* address bar */
.addressbar { display: flex; align-items: center; height: 35px; padding-right: 12px; color: #111; }
.history { display: flex; align-items: center; width: 106px; padding-left: 11px; color: #666; }
.fwd { margin-left: 14px; }
.fwd:disabled { color: #d2d2d2; }
.recent { margin-left: 7px; }
.up { margin-left: 5px; }
.path { flex: 1; display: flex; align-items: center; height: 23px; padding-left: 2px; border: 1px solid #d9d9d9; }
.path a { padding-bottom: 3px; }
.crumb-sep { width: 16px; height: 16px; margin: 0 4px 0 6px; color: #777; }
.path > .i16 { margin-right: -3px; }
.path-drop { margin-left: auto; color: #666; }
.refresh { display: flex; align-items: center; justify-content: center; width: 21px; height: 21px; margin-left: 1px; border-left: 1px solid #d9d9d9; }
.search { display: flex; align-items: center; width: 98px; height: 23px; margin-left: 12px; padding: 0 6px 0 9px; border: 1px solid #d9d9d9; }
.search input { flex: 1; min-width: 0; padding: 0 0 2px; border: 0; background: none; font: inherit; outline: 0; }
.search input::placeholder { color: #767676; opacity: 1; }

/* content */
.content { flex: 1; display: flex; }
.sidebar { width: 312px; padding-top: 16px; }
.tree { margin-bottom: 8px; }
.tree:last-child { margin-bottom: 0; }
.tree a { display: flex; align-items: center; gap: 5px; height: 24px; padding: 0 3px 0 32px; }
.tree .root { padding-left: 24px; }
.tree .current { background: #d9d9d9; }
.pin { width: 11px; height: 11px; margin-left: auto; fill: #8a959f; }

.scrollbar { display: flex; flex-direction: column; width: 16px; background: #f0f0f0; }
.sidebar + .scrollbar { margin-left: 1px; }
.scrollbar button { height: 17px; color: #555; }
.track { flex: 1; }
.thumb { width: 15px; background: #cdcdcd; }
.thumb-nav { height: 63%; }
.thumb-files { height: 63px; }

.files { position: relative; flex: 1; padding-left: 18px; }
.files table { width: 578px; table-layout: fixed; border-spacing: 0; }
.c-name { width: 258px; }
.c-date, .c-type { width: 120px; }
.c-size { width: 76px; }
.c-end { width: 4px; }
.files th { padding: 0 0 5px; color: #4c607a; font-weight: 400; text-align: left; }
.files th span { position: relative; display: flex; align-items: center; height: 28px; padding-left: 6px; border-right: 1px solid #e5e5e5; }
.files th:first-child span { padding-left: 3px; }
.sort { position: absolute; top: 1px; right: 56px; width: 8px; height: 4px; }
.files td { height: 21px; padding: 0 0 0 6px; border: solid transparent; border-width: 1px 0; color: #6d6d6d; line-height: 19px; white-space: nowrap; }
.files td:first-child { display: flex; align-items: center; gap: 4px; padding-left: 3px; border-left-width: 1px; color: #000; }
.files td:nth-child(4) { padding: 0 3px 0 0; border-right-width: 1px; text-align: right; }
.files .selected td { border-color: #99d1ff; background: #cce8ff; }
.files .hovered td { border-color: #e5f3ff; background: #e5f3ff; }

.tooltip {
  position: absolute;
  top: 251px;
  left: 146px;
  min-width: 223px;
  padding: 1px 5px 2px;
  border: 1px solid #bcbcbc;
  background: rgba(255, 255, 255, .4);
  color: #aaa;
  line-height: 17px;
  white-space: nowrap;
}
.marks { position: absolute; top: 74px; left: -32px; width: 190px; height: 100px; }

/* removable drive panel */
.usb { position: relative; width: 243px; border-left: 1px solid #d5e5f5; }
.usb-row { display: flex; align-items: center; justify-content: space-between; height: 26px; padding: 0 0 1px 8px; border-top: 1px solid #d5e5f5; background: #f4f8fd; font-size: 13px; }
.guard { display: flex; align-items: center; gap: 8px; padding-right: 14px; color: #10b04e; }
.gear { display: flex; align-items: center; justify-content: center; align-self: stretch; width: 42px; border-left: 1px solid #d5e5f5; }
.usb-list { padding-top: 2px; border-top: 1px solid #d5e5f5; }
.usb-list a { display: flex; align-items: center; gap: 2px; height: 21px; padding-left: 23px; }
.drawer { position: absolute; top: 328px; left: 0; display: flex; align-items: center; justify-content: center; width: 15px; height: 50px; border: 2px solid #d5e5f5; border-left-width: 1px; background: #f4f8fd; }

/* status bar */
.status { position: relative; display: flex; align-items: center; height: 23px; padding-left: 14px; color: #1e395b; }
.stat { display: flex; gap: 8px; padding-right: 10px; border-right: 1px solid #eee; }
.stat-sel { padding-left: 10px; }
.views { display: flex; align-self: stretch; margin-left: auto; padding-right: 4px; }
.view { display: flex; align-items: center; justify-content: center; width: 22px; }
.view-on { border: 1px solid #26a0da; background: #cbe8f6; }
.watermark {
  position: absolute;
  right: 0;
  bottom: 0;
  color: rgba(215, 215, 215, .75);
  font: 16px/20px "Liberation Sans", Arial, sans-serif;
}

/* strip of the window behind */
.behind { display: flex; height: 7px; padding: 0 62px 0 268px; }
.behind-tab { width: 180px; border-right: 1px solid #ddd; background: #fff; }
.behind-page { flex: 1; padding-left: 105px; background: #fff; }
.handle { display: block; width: 40px; height: 5px; border-radius: 0 0 8px 8px; background: #d4d4d4; }
```
